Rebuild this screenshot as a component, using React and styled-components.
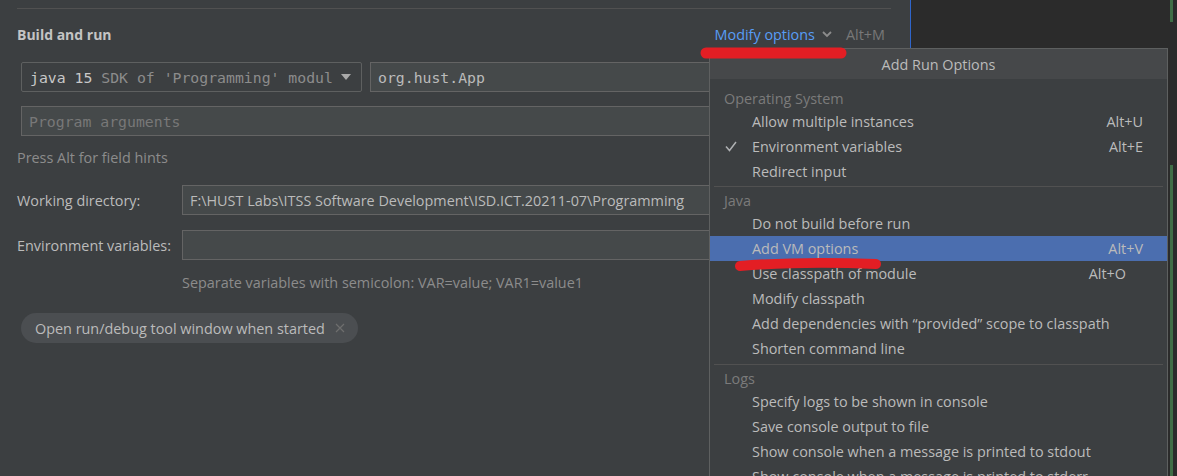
import styled, {createGlobalStyle} from 'styled-components'

const Global = createGlobalStyle`
  html, body {
    margin: 0;
    padding: 0;
    background: #3c3f41;
    overflow: hidden;
  }
`

const ui = `"Open Sans", "Liberation Sans", Arial, sans-serif`
const mono = `"DejaVu Sans Mono", "Liberation Mono", monospace`

const Page = styled.div`
  position: relative;
  display: flex;
  width: 1177px;
  height: 476px;
  overflow: hidden;
  font-family: ${ui};
  font-size: 14.4px;
  color: #bbbbbb;
`

const Dialog = styled.div`
  width: 911px;
  box-sizing: border-box;
  padding: 8px 19px 0 17px;
  border-right: 1px solid #2f65ca;
  background: #3c3f41;
  display: flex;
  flex-direction: column;
`

const Rule = styled.div`
  height: 1px;
  background: #515151;
`

const SectionHead = styled.div`
  margin-top: 12px;
  height: 26px;
  display: flex;
  align-items: center;
  justify-content: space-between;
  padding-right: 6px;
`

const Title = styled.div`
  font-weight: bold;
  font-size: 14px;
  color: #c4c4c4;
`

const Modify = styled.div`
  display: flex;
  align-items: center;
  color: #589df6;
`

const Shortcut = styled.span`
  color: #787878;
  margin-left: 10px;
`

const FieldRow = styled.div`
  margin-top: ${p => p.$top}px;
  display: flex;
  gap: 8px;
  padding-left: 4px;
`

const Combo = styled.div`
  width: 341px;
  height: 30px;
  box-sizing: border-box;
  border: 1px solid #5e6060;
  border-radius: 2px;
  background: #3c3f41;
  display: flex;
  align-items: center;
  padding: 0 9px 0 8px;
  font-family: ${mono};
  font-size: 14.8px;
  white-space: nowrap;
  overflow: hidden;
`

const Strong = styled.span`
  color: #c8c8c8;
`

const Dim = styled.span`
  color: #8c8c8c;
  flex: 1;
  overflow: hidden;
`

const Field = styled.div`
  flex: 1;
  height: 30px;
  box-sizing: border-box;
  border: 1px solid #646464;
  background: #45494a;
  display: flex;
  align-items: center;
  padding-left: 7px;
  font-family: ${p => (p.$mono ? mono : ui)};
  font-size: ${p => (p.$mono ? '14.8px' : '14.4px')};
  color: ${p => (p.$placeholder ? '#787878' : '#bbbbbb')};
  white-space: nowrap;
  overflow: hidden;
`

const Hint = styled.div`
  margin-top: ${p => p.$top}px;
  margin-left: ${p => p.$left || 0}px;
  line-height: 20px;
  color: #8c8c8c;
`

const LabelRow = styled.div`
  margin-top: ${p => p.$top}px;
  display: flex;
  align-items: center;
`

const Label = styled.div`
  width: 165px;
  flex-shrink: 0;
`

const Chip = styled.div`
  margin-top: 20px;
  margin-left: 4px;
  align-self: flex-start;
  height: 30px;
  box-sizing: border-box;
  border-radius: 15px;
  background: #4b4e51;
  display: flex;
  align-items: center;
  gap: 10px;
  padding: 0 13px 0 14px;
`

const Editor = styled.div`
  flex: 1;
  background: #2b2b2b;
  display: flex;
  justify-content: flex-end;
  padding-right: 4px;
`

const Stripe = styled.div`
  width: 3px;
  display: flex;
  flex-direction: column;
`

const Mark = styled.div`
  height: ${p => p.$h}px;
  flex: ${p => (p.$fill ? 1 : 'none')};
  background: ${p => p.$color || 'transparent'};
`

const Popup = styled.div`
  position: absolute;
  left: 709px;
  top: 48px;
  width: 459px;
  bottom: -60px;
  box-sizing: border-box;
  border: 1px solid #5e6060;
  background: #3c3f41;
  display: flex;
  flex-direction: column;
`

const PopupHead = styled.div`
  height: 30px;
  background: #46484a;
  display: flex;
  align-items: center;
  justify-content: center;
`

const MenuBody = styled.div`
  padding-top: 8px;
`

const Group = styled.div`
  height: 22px;
  display: flex;
  align-items: center;
  padding-left: 14px;
  color: #7b7b7b;
`

const Item = styled.div`
  height: 25px;
  display: flex;
  align-items: center;
  padding-left: 15px;
  padding-right: ${p => p.$pad || 24}px;
  background: ${p => (p.$active ? '#4b6eaf' : 'transparent')};
  white-space: nowrap;
`

const CheckSlot = styled.div`
  width: 27px;
  display: flex;
  align-items: center;
`

const ItemText = styled.div`
  flex: 1;
`

const Key = styled.div`
  color: #bbbbbb;
`

const Sep = styled.div`
  height: ${p => p.$h || 6}px;
  display: flex;
  align-items: center;
  padding: 0 4px;
  &::after {
    content: '';
    flex: 1;
    height: 1px;
    background: #515151;
  }
`

const Overlay = styled.svg`
  position: absolute;
  left: 0;
  top: 0;
  pointer-events: none;
`

const Chevron = () => (
  <svg width="18" height="12" viewBox="0 0 18 12" style={{marginLeft: 3}}>
    <polyline points="5,4 9,8 13,4" fill="none" stroke="#8c8c8c" strokeWidth="1.8" />
  </svg>
)

const Caret = () => (
  <svg width="12" height="8" viewBox="0 0 12 8">
    <polygon points="1,1 11,1 6,7" fill="#a9a9a9" />
  </svg>
)

const Cross = () => (
  <svg width="10" height="10" viewBox="0 0 10 10">
    <path d="M1 1 L9 9 M9 1 L1 9" stroke="#6e6e6e" strokeWidth="1.2" />
  </svg>
)

const Check = () => (
  <svg width="12" height="11" viewBox="0 0 12 11">
    <polyline points="1,5.5 4.5,9.5 11,1" fill="none" stroke="#afb1b3" strokeWidth="1.5" />
  </svg>
)

const menu = [
  {group: 'Operating System'},
  {text: 'Allow multiple instances', key: 'Alt+U'},
  {text: 'Environment variables', key: 'Alt+E', checked: true},
  {text: 'Redirect input'},
  {sep: 5},
  {group: 'Java'},
  {text: 'Do not build before run'},
  {text: 'Add VM options', key: 'Alt+V', active: true},
  {text: 'Use classpath of module', key: 'Alt+O', pad: 41},
  {text: 'Modify classpath'},
  {text: 'Add dependencies with \u201cprovided\u201d scope to classpath'},
  {text: 'Shorten command line'},
  {sep: 6},
  {group: 'Logs'},
  {text: 'Specify logs to be shown in console'},
  {text: 'Save console output to file'},
  {text: 'Show console when a message is printed to stdout'},
  {text: 'Show console when a message is printed to stderr'},
]

function App() {
  const rows = menu.map((m, i) => {
    if (m.sep) return <Sep key={i} $h={m.sep} />
    if (m.group) return <Group key={i}>{m.group}</Group>
    return (
      <Item key={i} $active={m.active} $pad={m.pad}>
        <CheckSlot>{m.checked && <Check />}</CheckSlot>
        <ItemText>{m.text}</ItemText>
        {m.key && <Key>{m.key}</Key>}
      </Item>
    )
  })

  return (
    <Page>
      <Global />
      <Dialog>
        <Rule />
        <SectionHead>
          <Title>Build and run</Title>
          <Modify>
            Modify options
            <Chevron />
            <Shortcut>Alt+M</Shortcut>
          </Modify>
        </SectionHead>
        <FieldRow $top={15}>
          <Combo>
            <Strong>java 15&nbsp;</Strong>
            <Dim>SDK of 'Programming' modul</Dim>
            <Caret />
          </Combo>
          <Field $mono>org.hust.App</Field>
        </FieldRow>
        <FieldRow $top={14}>
          <Field $mono $placeholder>Program arguments</Field>
        </FieldRow>
        <Hint $top={12}>Press Alt for field hints</Hint>
        <LabelRow $top={17}>
          <Label>Working directory:</Label>
          <Field>F:\HUST Labs\ITSS Software Development\ISD.ICT.20211-07\Programming</Field>
        </LabelRow>
        <LabelRow $top={15}>
          <Label>Environment variables:</Label>
          <Field />
        </LabelRow>
        <Hint $top={13} $left={165}>Separate variables with semicolon: VAR=value; VAR1=value1</Hint>
        <Chip>
          Open run/debug tool window when started
          <Cross />
        </Chip>
      </Dialog>
      <Editor>
        <Stripe>
          <Mark $h={22} $color="#3f6e46" />
          <Mark $h={143} />
          <Mark $fill $color="#3f6e46" />
        </Stripe>
      </Editor>
      <Popup>
        <PopupHead>Add Run Options</PopupHead>
        <MenuBody>{rows}</MenuBody>
      </Popup>
      <Overlay width="1177" height="476">
        <line x1="706" y1="53" x2="841" y2="53" stroke="#e31e24" strokeWidth="11" strokeLinecap="round" />
        <path d="M740 266 Q800 261 876 264" fill="none" stroke="#e31e24" strokeWidth="10" strokeLinecap="round" />
      </Overlay>
    </Page>
  )
}

export default App
